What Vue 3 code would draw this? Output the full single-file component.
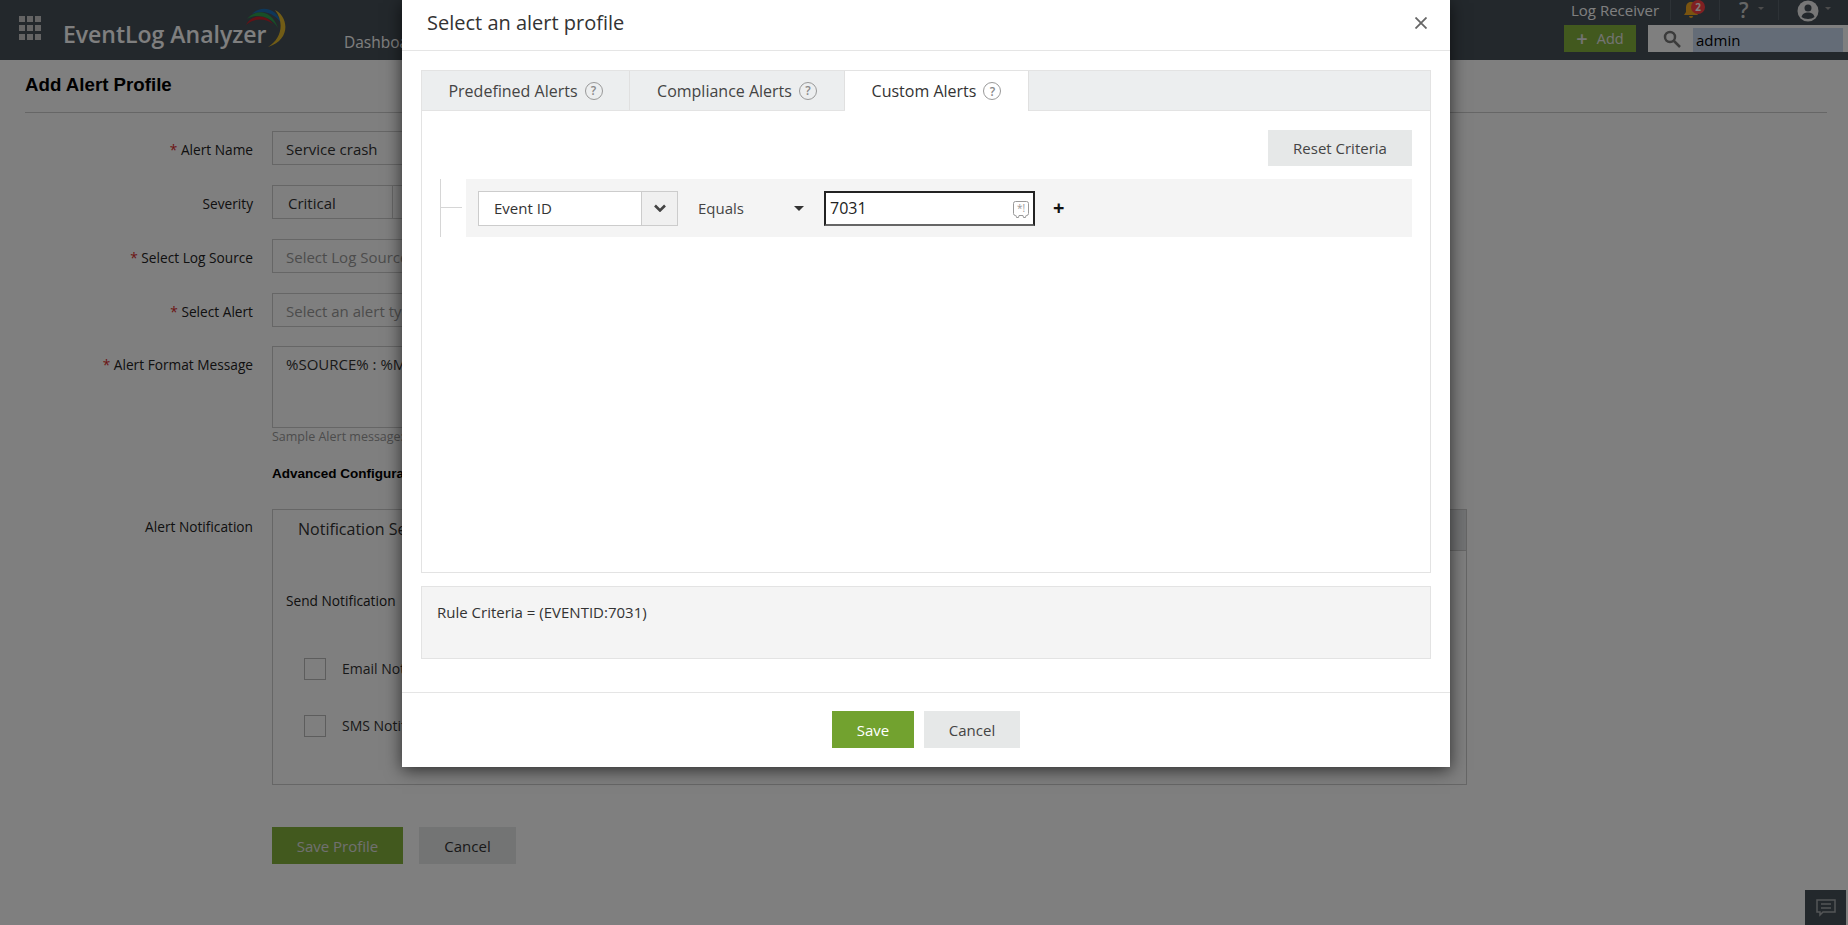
<script setup>
const tabs = [
  { name: 'Predefined Alerts', w: 208 },
  { name: 'Compliance Alerts', w: 215 },
  { name: 'Custom Alerts', w: 184, active: true }
]
const dots = Array.from({ length: 9 })
</script>

<template>
  <div class="page">
    <header class="top">
      <div class="apps"><i v-for="(d, i) in dots" :key="i"></i></div>
      <div class="logo">
        <span class="logo-text">EventLog Analyzer</span>
        <svg class="arcs" width="48" height="46" viewBox="0 0 48 46">
          <path d="M3 18C8 8 22 6 30 17 22 11 10 11 3 18Z" fill="#c8232c"/>
          <path d="M4 12C12 2 28 2 35 21 28 9 14 6 4 12Z" fill="#2f9e4f"/>
          <path d="M9 7C18-2 34 0 40 19 33 7 22 2 9 7Z" fill="#1c6fb5"/>
          <path d="M32 3C44 8 50 32 25 40 38 32 42 16 32 3Z" fill="#e2b92c"/>
        </svg>
      </div>
      <nav class="nav">Dashboard</nav>
      <div class="top-right">
        <div class="top-row">
          <span class="receiver">Log Receiver</span>
          <span class="bell">
            <svg width="20" height="20" viewBox="0 0 20 20"><path d="M10 2c-3.500 0-5 2.500-5 6v4l-2 3h14l-2-3V8c0-3.500-1.500-6-5-6zM8 16a2 2 0 0 0 4 0z" fill="#f4a920"/></svg>
            <b class="badge">2</b>
          </span>
          <span class="help"><span class="help-mark">?</span><i class="mini-caret"></i></span>
          <span class="user">
            <svg width="22" height="22" viewBox="0 0 22 22"><circle cx="11" cy="11" r="10.500" fill="#eee"/><circle cx="11" cy="8" r="3.500" fill="#465058"/><path d="M4.500 17c1-3.500 3.500-4.500 6.500-4.500s5.500 1 6.500 4.500c-3 2.500-10 2.500-13 0z" fill="#465058"/></svg>
            <i class="mini-caret"></i>
          </span>
        </div>
        <div class="top-row second">
          <button class="add"><span class="plus">+</span>Add</button>
          <div class="search">
            <svg width="18" height="18" viewBox="0 0 18 18" fill="none" stroke="#777" stroke-width="2.500"><circle cx="7" cy="7" r="5"/><path d="M11 11l6 6"/></svg>
            <span class="sel">admin</span>
          </div>
        </div>
      </div>
    </header>

    <main class="content">
      <h1 class="page-title">Add Alert Profile</h1>
      <div class="form">
        <div class="row"><label><em>*</em> Alert Name</label><div class="field">Service crash</div></div>
        <div class="row">
          <label>Severity</label>
          <div class="field seg"><span class="seg-cell">Critical</span><span class="seg-rest"></span></div>
        </div>
        <div class="row"><label><em>*</em> Select Log Source</label><div class="field ph">Select Log Source</div></div>
        <div class="row last-short"><label><em>*</em> Select Alert</label><div class="field ph">Select an alert type</div></div>
        <div class="row tall">
          <label><em>*</em> Alert Format Message</label>
          <div class="col">
            <div class="field area">%SOURCE% : %MESSAGE%</div>
            <div class="sample">Sample Alert message: service stopped</div>
            <div class="advanced">Advanced Configuration</div>
          </div>
        </div>
        <div class="row notif">
          <label>Alert Notification</label>
          <div class="notif-box">
            <div class="notif-tabs"><span class="notif-tab">Notification Settings</span></div>
            <div class="send">Send Notification</div>
            <div class="check first"><i></i>Email Notification</div>
            <div class="check second"><i></i>SMS Notification</div>
          </div>
        </div>
        <div class="actions">
          <button class="save-profile">Save Profile</button>
          <button class="cancel-profile">Cancel</button>
        </div>
      </div>
    </main>

    <div class="chat">
      <svg width="20" height="18" viewBox="0 0 20 18" fill="none" stroke="#a8abae" stroke-width="1.500"><path d="M1 1h18v12H7l-3 3v-3H1z"/><path d="M5 5h10M5 9h10"/></svg>
    </div>

    <div class="overlay"></div>

    <section class="modal">
      <div class="m-head">
        <h2>Select an alert profile</h2>
        <svg class="close" width="12" height="12" viewBox="0 0 12 12" stroke="#666" stroke-width="1.800"><path d="M0.500 0.500l11 11M11.500 0.500l-11 11"/></svg>
      </div>
      <div class="m-body">
        <div class="tabbox">
          <div class="tabs">
            <div v-for="t in tabs" :key="t.name" class="tab" :class="{ active: t.active }" :style="{ width: t.w + 'px' }">
              {{ t.name }}<span class="q">?</span>
            </div>
          </div>
          <div class="tab-body">
            <div class="reset-line"><button class="reset">Reset Criteria</button></div>
            <div class="crit-line">
              <div class="tree"><i></i></div>
              <div class="crit">
                <div class="combo">
                  <span class="combo-text">Event ID</span>
                  <span class="combo-btn">
                    <svg width="12" height="8" viewBox="0 0 12 8" fill="none" stroke="#444" stroke-width="2.600"><path d="M1 1.500l5 5 5-5"/></svg>
                  </span>
                </div>
                <div class="equals">Equals<i class="caret"></i></div>
                <div class="value">
                  7031
                  <svg class="safe" width="16" height="17" viewBox="0 0 16 17" fill="none" stroke="#999">
                    <path d="M2.500 0.500h11a2 2 0 0 1 2 2v10a2 2 0 0 1-2 2h-0.500l-0.500 2h-2l-0.500-2h-4l-0.500 2h-2l-0.500-2h-0.500a2 2 0 0 1-2-2v-10a2 2 0 0 1 2-2z"/>
                    <text x="8" y="11" text-anchor="middle" font-size="10" font-family="Open Sans, sans-serif" fill="#999" stroke="none">*!</text>
                  </svg>
                </div>
                <span class="add-crit">+</span>
              </div>
            </div>
          </div>
        </div>
        <div class="rule">Rule Criteria = (EVENTID:7031)</div>
      </div>
      <div class="m-foot">
        <button class="save">Save</button>
        <button class="cancel">Cancel</button>
      </div>
    </section>
  </div>
</template>

<style>
html, body { margin: 0; padding: 0; overflow: hidden; background: #fff; }
</style>

<style scoped>
.page { position: relative; width: 1848px; height: 925px; overflow: hidden; background: #fff; font-family: "Open Sans", "Noto Sans", sans-serif; font-size: 14px; color: #333; }
button { font-family: inherit; border: 0; padding: 0; }
.top { height: 60px; background: #465058; display: flex; color: #e6e6e6; }
.apps { display: grid; grid-template-columns: repeat(3, 6px); grid-auto-rows: 6px; gap: 3px 2px; margin: 16px 0 0 19px; width: 22px; height: 24px; }
.apps i { background: #c8c8c8; }
.logo { position: relative; margin-left: 22px; width: 229px; }
.logo-text { display: block; font-size: 23px; font-weight: 600; line-height: 33px; margin-top: 18px; color: #fff; white-space: nowrap; }
.arcs { position: absolute; left: 180px; top: 7px; }
.nav { margin: 30px 0 0 52px; font-size: 15.500px; line-height: 24px; color: #fff; white-space: nowrap; }
.top-right { margin-left: auto; width: 284px; display: flex; flex-direction: column; }
.top-row { display: flex; align-items: flex-start; height: 25px; position: relative; }
.receiver { font-size: 15px; line-height: 20px; color: #fff; width: 107px; height: 20px; padding-left: 7px; box-sizing: border-box; white-space: nowrap; border-right: 1px solid #5a646c; }
.bell { position: relative; width: 49px; height: 20px; border-right: 1px solid #5a646c; padding-left: 10px; box-sizing: border-box; }
.badge { position: absolute; left: 20px; top: 0; width: 14px; height: 14px; border-radius: 50%; background: #ff4045; color: #fff; font-size: 10px; line-height: 14px; text-align: center; font-weight: 700; }
.help { width: 59px; height: 20px; box-sizing: border-box; padding-left: 19px; border-right: 1px solid #5a646c; display: flex; align-items: flex-start; }
.help-mark { font-size: 21px; line-height: 21px; font-weight: 600; color: #ccc; }
.user { display: flex; align-items: flex-start; padding-left: 18px; }
.mini-caret { display: block; width: 0; height: 0; border: 3px solid transparent; border-top-color: #999; margin: 7px 0 0 6px; }
.help .mini-caret { margin-left: 9px; }
.second { height: 27px; align-items: center; }
.add { width: 72px; height: 27px; background: #85b23c; color: #e8e8e8; font-size: 14.500px; display: flex; align-items: center; justify-content: center; gap: 9px; }
.plus { font-size: 20px; line-height: 20px; font-weight: 600; }
.search { margin-left: 12px; flex: 1; height: 27px; background: #fff; display: flex; align-items: center; padding-left: 15px; }
.sel { margin: 3px 5px 0 12px; flex: 1; height: 24px; line-height: 24px; background: #c8d8ee; color: #000; font-size: 15px; padding-left: 3px; }

.content { padding: 0 21px 0 25px; }
.page-title { margin: 0; height: 52px; line-height: 50px; font-family: "Liberation Sans", Arial, sans-serif; font-size: 18.700px; font-weight: 700; color: #000; border-bottom: 1px solid #ccc; }
.form { padding-top: 18px; }
.row { display: flex; margin-bottom: 20px; }
.row label { width: 228px; height: 34px; margin-right: 19px; flex: none; text-align: right; line-height: 37px; font-size: 13.700px; color: #222; white-space: nowrap; }
.row em { color: #d92a2a; font-style: normal; }
.last-short { margin-bottom: 19px; }
.field { width: 400px; height: 34px; box-sizing: border-box; border: 1px solid #ccc; padding: 0 13px; line-height: 34px; font-size: 15px; background: #fff; color: #333; white-space: nowrap; overflow: hidden; }
.ph { color: #999; }
.seg { display: flex; padding: 0; }
.seg-cell { width: 120px; padding-left: 15px; box-sizing: border-box; border-right: 1px solid #ccc; }
.tall { margin-bottom: 0; }
.tall label { line-height: 37px; }
.area { height: 82px; line-height: 35px; }
.col { display: flex; flex-direction: column; }
.sample { font-size: 12.500px; color: #999; line-height: 17px; }
.advanced { font-family: "Liberation Sans", Arial, sans-serif; font-weight: 700; font-size: 13.500px; color: #000; line-height: 18px; margin-top: 20px; }
.notif { margin-top: 26px; margin-bottom: 42px; }
.notif label { line-height: 36px; }
.notif-box { width: 1195px; height: 276px; box-sizing: border-box; border: 1px solid #ccc; flex: none; }
.notif-tabs { height: 40px; background: #e4e7e9; border-bottom: 1px solid #ccc; }
.notif-tab { display: inline-block; height: 41px; line-height: 38px; background: #fff; padding: 0 26px 0 25px; font-size: 16px; color: #333; width: 300px; box-sizing: border-box; }
.send { margin: 40px 0 0 13px; line-height: 20px; font-size: 13.700px; color: #222; }
.check { display: flex; align-items: center; line-height: 20px; color: #333; }
.check i { width: 22px; height: 22px; box-sizing: border-box; border: 1px solid #bbb; margin: 0 16px 0 31px; }
.check.first { margin-top: 47px; }
.check.second { margin-top: 32px; }
.actions { display: flex; margin-left: 247px; gap: 16px; }
.save-profile { width: 131px; height: 37px; background: #85b23c; color: #e0e0e0; font-size: 15px; }
.cancel-profile { width: 97px; height: 37px; background: #e6e8e8; color: #333; font-size: 15px; }
.chat { position: absolute; right: 2px; bottom: 0; width: 41px; height: 35px; background: #465058; display: flex; align-items: center; justify-content: center; }
.overlay { position: absolute; inset: 0; background: rgba(0, 0, 0, 0.5); }

.modal { position: absolute; left: 402px; top: 0; width: 1048px; height: 767px; background: #fff; box-shadow: 0 3px 16px rgba(0, 0, 0, 0.65); display: flex; flex-direction: column; }
.m-head { height: 45px; border-bottom: 1px solid #e5e5e5; display: flex; align-items: center; justify-content: space-between; padding: 0 23px 5px 25px; flex: none; }
.m-head h2 { margin: 0; font-size: 20px; font-weight: 400; color: #333; line-height: 26px; }
.m-body { flex: 1; padding: 19px 19px 0 19px; }
.tabbox { height: 503px; box-sizing: border-box; border: 1px solid #e3e3e3; display: flex; flex-direction: column; }
.tabs { height: 39px; display: flex; background: #eceeef; border-bottom: 1px solid #e3e3e3; flex: none; }
.tab { height: 39px; box-sizing: border-box; display: flex; align-items: center; justify-content: center; font-size: 16px; color: #444; border-right: 1px solid #e0e0e0; white-space: nowrap; }
.tab.active { height: 40px; background: #fff; color: #333; }
.q { display: inline-flex; align-items: center; justify-content: center; width: 18px; height: 18px; box-sizing: border-box; border: 1.500px solid #999; border-radius: 50%; font-size: 12px; font-weight: 600; color: #888; margin-left: 7px; }
.tab-body { flex: 1; padding: 19px 18px 0 15px; }
.reset-line { display: flex; justify-content: flex-end; height: 36px; margin-bottom: 13px; }
.reset { width: 144px; height: 36px; background: #e6e8e8; color: #444; font-size: 15px; }
.crit-line { display: flex; }
.tree { width: 26px; height: 58px; margin-left: 3px; flex: none; border-left: 1px solid #d6d6d6; box-sizing: border-box; padding-top: 28px; }
.tree i { display: block; width: 21px; height: 1px; background: #d6d6d6; }
.crit { flex: 1; height: 58px; background: #f4f4f4; display: flex; align-items: center; padding-left: 12px; }
.combo { width: 200px; height: 35px; box-sizing: border-box; border: 1px solid #ccc; background: #fff; display: flex; }
.combo-text { flex: 1; padding-left: 15px; line-height: 33px; font-size: 15px; color: #333; }
.combo-btn { width: 35px; background: #f0f0f0; border-left: 1px solid #ccc; display: flex; align-items: center; justify-content: center; }
.equals { width: 146px; box-sizing: border-box; padding-left: 20px; display: flex; align-items: center; font-size: 15px; color: #444; }
.caret { width: 0; height: 0; border: 5px solid transparent; border-top-color: #333; border-bottom-width: 0; margin-left: 50px; }
.value { position: relative; width: 211px; height: 35px; box-sizing: border-box; border: 2px solid #222; border-bottom-color: #666; background: #fff; padding-left: 4px; line-height: 30px; font-size: 16px; color: #222; }
.safe { position: absolute; right: 4px; top: 8px; }
.add-crit { margin-left: 18px; font-size: 20px; font-weight: 700; color: #111; line-height: 20px; }
.rule { height: 73px; margin-top: 13px; box-sizing: border-box; background: #f4f4f4; border: 1px solid #e3e3e3; padding: 15px 15px; line-height: 20px; font-size: 15px; color: #333; }
.m-foot { height: 75px; border-top: 1px solid #e5e5e5; display: flex; justify-content: center; align-items: flex-start; gap: 10px; padding-top: 18px; box-sizing: border-box; flex: none; }
.save { width: 82px; height: 37px; background: #72a22f; color: #fff; font-size: 15px; }
.cancel { width: 96px; height: 37px; background: #e6e8e8; color: #444; font-size: 15px; }
</style>
